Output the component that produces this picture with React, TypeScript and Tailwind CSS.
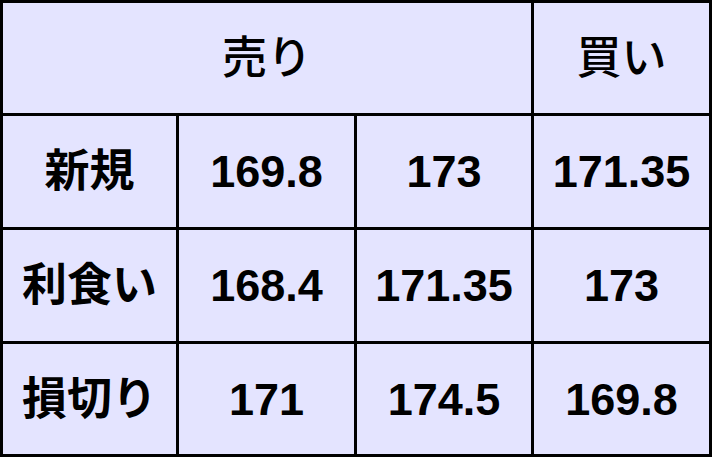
const font = {
  fontFamily: '"Liberation Sans", "Noto Sans CJK JP", sans-serif',
};

const rows: [string, string, string, string][] = [
  ["新規", "169.8", "173", "171.35"],
  ["利食い", "168.4", "171.35", "173"],
  ["損切り", "171", "174.5", "169.8"],
];

function Cell({ children, className = "" }: { children: React.ReactNode; className?: string }) {
  return (
    <div className={`flex items-center justify-center bg-[#e4e4ff] text-black text-[45px] leading-none ${className}`}>
      {children}
    </div>
  );
}

export default function App() {
  return (
    <div
      style={font}
      className="grid w-[712px] h-[457px] grid-cols-[173px_175px_174px_175px] grid-rows-[110px_111px_111px_110px] gap-[3px] p-[3px] bg-black"
    >
      <Cell className="col-span-3 font-medium">売り</Cell>
      <Cell className="font-medium">買い</Cell>
      {rows.map((r) =>
        r.map((v, i) => (
          <Cell key={r[0] + i} className="font-bold">
            {v}
          </Cell>
        ))
      )}
    </div>
  );
}
